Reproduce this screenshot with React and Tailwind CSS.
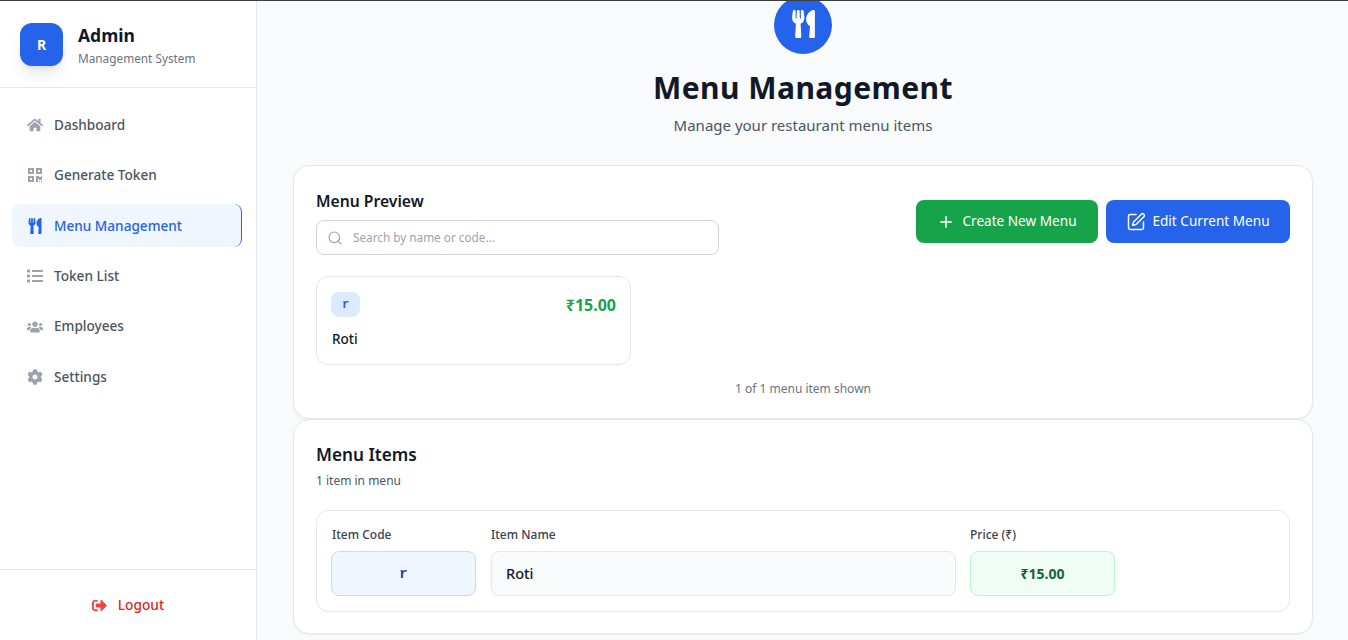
import React from "react";
import { FaHome, FaQrcode, FaUtensils, FaList, FaUsers, FaCog, FaSignOutAlt } from "react-icons/fa";
import { Plus, SquarePen, Search } from "lucide-react";

const nav = [
  { label: "Dashboard", Icon: FaHome },
  { label: "Generate Token", Icon: FaQrcode },
  { label: "Menu Management", Icon: FaUtensils, active: true },
  { label: "Token List", Icon: FaList },
  { label: "Employees", Icon: FaUsers },
  { label: "Settings", Icon: FaCog },
];

export default function App() {
  return (
    <div className="h-[640px] w-[1348px] overflow-hidden flex flex-col bg-[#f9fafb] font-['Noto_Sans',sans-serif]">
      <div className="h-px bg-[#3c3c3c] shrink-0" />
      <div className="flex flex-1 min-h-0">
        <aside className="w-[257px] shrink-0 bg-white border-r border-[#e5e7eb] flex flex-col">
          <div className="h-[87px] border-b border-[#e5e7eb] px-5 flex items-center gap-[15px] shrink-0">
            <div className="w-[43px] h-[43px] mt-px rounded-xl bg-[#2563eb] text-white flex items-center justify-center text-sm font-bold shadow-lg">R</div>
            <div>
              <div className="text-[17.5px] leading-[26px] font-bold text-[#111827]">Admin</div>
              <div className="text-[11.8px] leading-[18px] mt-px text-[#6b7280]">Management System</div>
            </div>
          </div>
          <nav className="flex-1 pt-[15.5px] pl-3 pr-[14px] flex flex-col gap-[7.4px]">
            {nav.map(({ label, Icon, active }) => (
              <div
                key={label}
                className={
                  active
                    ? "h-[43px] rounded-lg bg-[#eff6ff] border-r border-[#2563eb] pl-[15px] flex items-center gap-[11px] text-[#2563eb] text-[13.6px] font-medium"
                    : "h-[43px] rounded-lg pl-[15px] flex items-center gap-[11px] text-[#4b5563] text-[13.6px] font-medium"
                }
              >
                <Icon className={active ? "w-4 h-4 text-[#2563eb]" : "w-4 h-4 text-[#9ca3af]"} />
                <span>{label}</span>
              </div>
            ))}
          </nav>
          <div className="h-[71px] pt-px border-t border-[#e5e7eb] flex items-center justify-center gap-[11px] text-[#ef4444] text-[13.7px] font-medium shrink-0">
            <FaSignOutAlt className="w-[15px] h-[15px]" />
            <span className="text-[#dc2626]">Logout</span>
          </div>
        </aside>
        <main className="flex-1 min-w-0 pl-9 pr-[35px] overflow-hidden">
          <div className="-mt-[5px] flex flex-col items-center">
            <div className="w-[58px] h-[58px] rounded-full bg-[#2563eb] flex items-center justify-center text-white">
              <FaUtensils className="h-7 w-[23px] -mt-[2px]" />
            </div>
            <h1 className="mt-[14px] text-[30px] leading-[40px] tracking-[0.45px] font-bold text-[#111827]">Menu Management</h1>
            <p className="mt-[5px] text-[15px] leading-[24px] text-[#4b5563]">Manage your restaurant menu items</p>
          </div>
          <section className="mt-[28px] h-[254px] rounded-2xl bg-white border border-[#e5e7eb] shadow-[0_1px_2px_rgba(0,0,0,0.06)] px-[22px] pt-[25px]">
            <div className="flex justify-between">
              <div className="w-[403px]">
                <h2 className="text-[15.7px] leading-5 font-semibold text-[#111827]">Menu Preview</h2>
                <div className="mt-[9px] h-[35px] rounded-lg border border-[#d1d5db] flex items-center pl-[10px] gap-[10px]">
                  <Search className="w-4 h-4 text-[#9ca3af]" strokeWidth={1.75} />
                  <span className="text-[11.75px] text-[#9ca3af]">Search by name or code...</span>
                </div>
              </div>
              <div className="flex gap-2 mt-[9px] h-[43px]">
                <div className="w-[182px] rounded-lg bg-[#16a34a] text-white flex items-center justify-center gap-[7px] text-[13.6px]">
                  <Plus className="w-[18px] h-[18px]" />
                  <span>Create New Menu</span>
                </div>
                <div className="w-[184px] rounded-lg bg-[#2563eb] text-white flex items-center justify-center gap-[6px] text-[13.6px]">
                  <SquarePen className="w-5 h-5" strokeWidth={1.75} />
                  <span>Edit Current Menu</span>
                </div>
              </div>
            </div>
            <div className="mt-[21px] w-[315px] h-[89px] rounded-xl border border-[#e5e7eb] bg-white px-[14px] pt-[15px]">
              <div className="flex items-center justify-between">
                <div className="w-[29px] h-[25px] rounded-lg bg-[#dbeafe] text-[#2563eb] flex items-center justify-center text-xs font-semibold font-['Liberation_Mono',monospace]">r</div>
                <div className="text-base font-bold text-[#16a34a]">₹15.00</div>
              </div>
              <div className="mt-[12px] pl-px text-[13.5px] leading-5 font-medium text-[#111827]">Roti</div>
            </div>
            <p className="mt-[15px] text-center text-xs leading-[18px] text-[#6b7280]">1 of 1 menu item shown</p>
          </section>
          <section className="h-[215px] rounded-2xl bg-white border border-[#e5e7eb] shadow-[0_1px_2px_rgba(0,0,0,0.06)] px-[22px] pt-[23px]">
            <h2 className="text-[17.2px] leading-6 font-semibold text-[#111827]">Menu Items</h2>
            <p className="mt-[5px] text-xs leading-[18px] text-[#4b5563]">1 item in menu</p>
            <div className="mt-[20px] h-[102px] rounded-xl border border-[#e5e7eb] px-[14px] pt-[15px] flex gap-[14px]">
              <div className="w-[145px]">
                <div className="text-xs leading-[18px] pl-px font-medium text-[#374151]">Item Code</div>
                <div className="mt-[7px] h-[45px] rounded-lg border border-[#bfdbfe] bg-[#eff6ff] flex items-center justify-center text-[#1e40af] text-sm font-semibold font-['Liberation_Mono',monospace]">r</div>
              </div>
              <div className="w-[465px] ml-px">
                <div className="text-xs leading-[18px] font-medium text-[#374151]">Item Name</div>
                <div className="mt-[7px] h-[45px] rounded-lg border border-[#e5e7eb] bg-[#f9fafb] flex items-center pl-[14px] text-[#111827] text-[14.5px] font-medium">Roti</div>
              </div>
              <div className="w-[145px]">
                <div className="text-xs leading-[18px] font-medium text-[#374151]">Price (₹)</div>
                <div className="mt-[7px] h-[45px] rounded-lg border border-[#bbf7d0] bg-[#f0fdf4] flex items-center justify-center text-[#166534] text-sm font-bold">₹15.00</div>
              </div>
            </div>
          </section>
        </main>
      </div>
    </div>
  );
}
